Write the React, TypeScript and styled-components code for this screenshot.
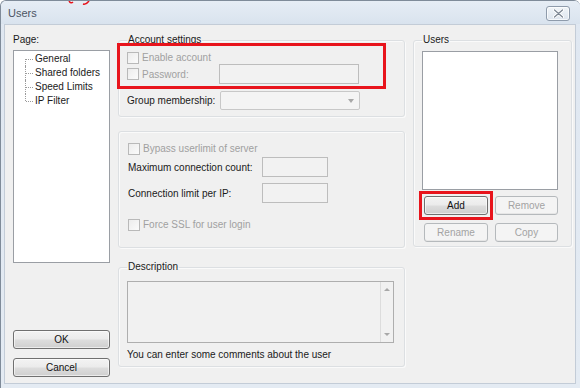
import styled, { createGlobalStyle } from "styled-components";

const GlobalStyle = createGlobalStyle`
  html, body {
    margin: 0;
    padding: 0;
    background: #ffffff;
  }
  body {
    font-family: "Liberation Sans", Arial, sans-serif;
    font-size: 10px;
    color: #1a1a1a;
  }
  * {
    box-sizing: border-box;
  }
`;

const pages = ["General", "Shared folders", "Speed Limits", "IP Filter"];

const App = () => {
  return (
    <>
      <GlobalStyle />
      <Window>
        <TitleBar>
          <TitleText>Users</TitleText>
          <CloseButton aria-label="Close">
            <svg width="11" height="9" viewBox="0 0 11 9">
              <path
                d="M1.5 1 L9.5 8 M9.5 1 L1.5 8"
                stroke="#ffffff"
                strokeWidth="3"
                strokeLinecap="round"
              />
              <path
                d="M1.5 1 L9.5 8 M9.5 1 L1.5 8"
                stroke="#7d8794"
                strokeWidth="1.3"
                strokeLinecap="round"
              />
            </svg>
          </CloseButton>
          <RedScribble width="24" height="5" viewBox="0 0 24 5">
            <path d="M1 0 Q3 3 5 1" stroke="#e8141c" strokeWidth="1.5" fill="none" />
            <path d="M15 3 Q18 4 21 0" stroke="#e8141c" strokeWidth="1.5" fill="none" />
          </RedScribble>
        </TitleBar>

        <Client>
          <LeftColumn>
            <Caption>Page:</Caption>
            <TreeBox>
              {pages.map((p, i) => (
                <TreeItem key={p} $first={i === 0} $last={i === pages.length - 1}>
                  {p}
                </TreeItem>
              ))}
            </TreeBox>
            <DialogButtons>
              <Button>OK</Button>
              <Button>Cancel</Button>
            </DialogButtons>
          </LeftColumn>

          <MiddleColumn>
            <GroupBox $pad="0 8px 6px 8px">
              <Legend>Account settings</Legend>
              <RedFrame>
                <CheckRow>
                  <CheckBox />
                  <Dim>Enable account</Dim>
                </CheckRow>
                <FieldRow $label={92}>
                  <CheckRow>
                    <CheckBox />
                    <Dim>Password:</Dim>
                  </CheckRow>
                  <TextBox $width={140} />
                </FieldRow>
              </RedFrame>
              <FieldRow $label={93} $top={2}>
                <span>Group membership:</span>
                <SelectBox>
                  <SelectArrow />
                </SelectBox>
              </FieldRow>
            </GroupBox>

            <GroupBox $pad="10px 8px 16px 9px" $top={14}>
              <CheckRow>
                <CheckBox />
                <Dim>Bypass userlimit of server</Dim>
              </CheckRow>
              <FieldRow $label={134} $top={2}>
                <span>Maximum connection count:</span>
                <TextBox $width={66} />
              </FieldRow>
              <FieldRow $label={134} $top={6}>
                <span>Connection limit per IP:</span>
                <TextBox $width={66} />
              </FieldRow>
              <CheckRow $top={15}>
                <CheckBox />
                <Dim>Force SSL for user login</Dim>
              </CheckRow>
            </GroupBox>

            <GroupBox $pad="0 10px 5px 8px" $top={13}>
              <Legend>Description</Legend>
              <TextArea>
                <ScrollTrack>
                  <ScrollArrow $dir="up" />
                  <ScrollArrow $dir="down" />
                </ScrollTrack>
              </TextArea>
              <Hint>You can enter some comments about the user</Hint>
            </GroupBox>
          </MiddleColumn>

          <RightColumn>
            <GroupBox $pad="0 13px 4px 8px" $fill>
              <Legend>Users</Legend>
              <UserList />
              <ButtonGrid>
                <AddFrame>
                  <Button>Add</Button>
                </AddFrame>
                <Button disabled>Remove</Button>
                <Button disabled>Rename</Button>
                <Button disabled>Copy</Button>
              </ButtonGrid>
            </GroupBox>
          </RightColumn>
        </Client>
      </Window>
    </>
  );
};

export default App;

const Window = styled.div`
  position: relative;
  width: 580px;
  height: 388px;
  display: flex;
  flex-direction: column;
  background: linear-gradient(#dfe7f1, #e4ebf3);
  border: 1px solid #7f8b99;
  border-bottom: none;
  border-right: none;
  border-radius: 6px 6px 0 0;
  overflow: hidden;
`;

const TitleBar = styled.div`
  position: relative;
  height: 23px;
  flex-shrink: 0;
  display: flex;
  align-items: center;
  justify-content: space-between;
  padding: 0 10px 0 7px;
  background: linear-gradient(#e6edf5, #d9e3ee);
`;

const TitleText = styled.span`
  font-size: 11px;
  color: #4b5563;
  padding-top: 1px;
`;

const CloseButton = styled.button`
  width: 24px;
  height: 15px;
  margin-top: 2px;
  padding: 0;
  display: flex;
  align-items: center;
  justify-content: center;
  border: 1px solid #8e9bab;
  border-radius: 3px;
  background: linear-gradient(#f1f5f9, #dde5ee);
  box-shadow: inset 0 0 0 1px rgba(255, 255, 255, 0.7);
`;

const RedScribble = styled.svg`
  position: absolute;
  left: 67px;
  top: 0;
`;

const Client = styled.div`
  flex: 1;
  margin: 0 4px 4px 3px;
  padding: 9px 2px 6px 8px;
  background: #f0f0f0;
  border: 1px solid #c3ccd7;
  display: grid;
  grid-template-columns: 97px 287px 159px;
  column-gap: 8px;
`;

const LeftColumn = styled.div`
  display: flex;
  flex-direction: column;
`;

const MiddleColumn = styled.div`
  display: flex;
  flex-direction: column;
`;

const RightColumn = styled.div`
  display: flex;
  flex-direction: column;
`;

const Caption = styled.div`
  height: 14px;
  line-height: 12px;
  margin-bottom: 2px;
`;

const TreeBox = styled.ul`
  margin: 0;
  padding: 1px 0 0 0;
  list-style: none;
  height: 213px;
  background: #ffffff;
  border: 1px solid #9a9ea4;
`;

const TreeItem = styled.li<{ $first?: boolean; $last?: boolean }>`
  position: relative;
  height: 14px;
  line-height: 14px;
  padding-left: 21px;
  white-space: nowrap;

  &::before {
    content: "";
    position: absolute;
    left: 11px;
    top: ${(p) => (p.$first ? "7px" : "0")};
    bottom: ${(p) => (p.$last ? "7px" : "0")};
    border-left: 1px dotted #9a9a9a;
  }

  &::after {
    content: "";
    position: absolute;
    left: 12px;
    width: 7px;
    top: 7px;
    border-top: 1px dotted #9a9a9a;
  }
`;

const DialogButtons = styled.div`
  margin-top: auto;
  display: flex;
  flex-direction: column;
  gap: 9px;
`;

const Button = styled.button`
  height: 19px;
  width: 100%;
  padding: 0;
  font-family: inherit;
  font-size: 10px;
  color: #111111;
  border: 1px solid #707070;
  border-radius: 3px;
  background: linear-gradient(#f3f3f3 0%, #ebebeb 48%, #dddddd 52%, #cfcfcf 100%);
  box-shadow: inset 0 0 0 1px rgba(255, 255, 255, 0.6);

  &:disabled {
    color: #a3a3a3;
    border-color: #b5b9bc;
    background: #f4f4f4;
    box-shadow: inset 0 -1px 0 #e6e6e6;
  }
`;

const GroupBox = styled.fieldset<{ $pad: string; $top?: number; $fill?: boolean }>`
  margin: ${(p) => p.$top ?? 0}px 0 0 0;
  padding: ${(p) => p.$pad};
  min-width: 0;
  border: 1px solid #dcdfe2;
  border-radius: 3px;
  box-shadow: inset 1px 1px 0 #fafafa, 1px 1px 0 #fafafa;
  display: flex;
  flex-direction: column;
`;

const Legend = styled.legend`
  padding: 0 1px;
  margin: 0;
  line-height: 12px;
  color: #1a1a1a;
`;

const RedFrame = styled.div`
  width: 269px;
  margin: -3px 0 0 -10px;
  padding: 5px 0 2px 7px;
  border: 3px solid #e8141c;
  display: flex;
  flex-direction: column;
`;

const CheckRow = styled.div<{ $top?: number }>`
  display: flex;
  align-items: center;
  gap: 3px;
  height: 13px;
  margin-top: ${(p) => p.$top ?? 0}px;
  white-space: nowrap;
`;

const CheckBox = styled.span`
  width: 12px;
  height: 12px;
  flex-shrink: 0;
  border: 1px solid #b9b9b9;
  background: linear-gradient(135deg, #ececec, #fbfbfb);
`;

const Dim = styled.span`
  color: #a0a0a0;
`;

const FieldRow = styled.div<{ $label: number; $top?: number }>`
  display: grid;
  grid-template-columns: ${(p) => p.$label}px auto;
  align-items: center;
  margin-top: ${(p) => p.$top ?? 0}px;
  white-space: nowrap;
`;

const TextBox = styled.div<{ $width: number }>`
  width: ${(p) => p.$width}px;
  height: 20px;
  border: 1px solid #bdbdbd;
  background: #f2f2f2;
`;

const SelectBox = styled.div`
  position: relative;
  width: 140px;
  height: 19px;
  border: 1px solid #c8c8c8;
  border-radius: 2px;
  background: #f4f4f4;
`;

const SelectArrow = styled.span`
  position: absolute;
  right: 5px;
  top: 7px;
  width: 0;
  height: 0;
  border-left: 3.5px solid transparent;
  border-right: 3.5px solid transparent;
  border-top: 4px solid #a8a8a8;
`;

const TextArea = styled.div`
  display: flex;
  justify-content: flex-end;
  width: 267px;
  height: 62px;
  margin-top: 8px;
  border: 1px solid #aeaeae;
  background: #f1f1f1;
`;

const ScrollTrack = styled.div`
  width: 13px;
  display: flex;
  flex-direction: column;
  justify-content: space-between;
  align-items: center;
  padding: 6px 0 6px 0;
  border-left: 1px solid #dcdcdc;
`;

const ScrollArrow = styled.span<{ $dir: "up" | "down" }>`
  width: 0;
  height: 0;
  border-left: 3px solid transparent;
  border-right: 3px solid transparent;
  ${(p) =>
    p.$dir === "up"
      ? "border-bottom: 3px solid #a8a8a8;"
      : "border-top: 3px solid #a8a8a8;"}
`;

const Hint = styled.div`
  margin-top: 6px;
  line-height: 12px;
  white-space: nowrap;
`;

const UserList = styled.div`
  width: 136px;
  height: 139px;
  margin-top: 5px;
  background: #ffffff;
  border: 1px solid #9a9ea4;
`;

const ButtonGrid = styled.div`
  display: grid;
  grid-template-columns: 64px 63px;
  column-gap: 7px;
  row-gap: 8px;
  margin: 6px 0 0 2px;
`;

const AddFrame = styled.div`
  margin: -5px;
  padding: 2px;
  border: 3px solid #e8141c;
`;
